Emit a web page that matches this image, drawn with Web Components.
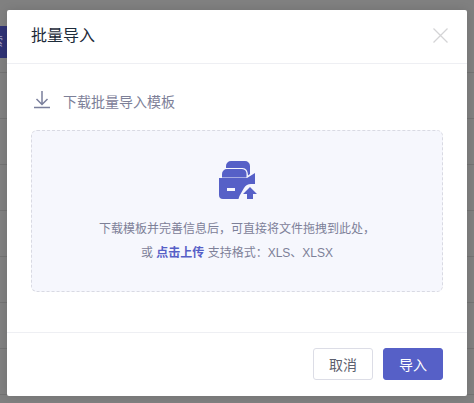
<!DOCTYPE html>
<html lang="zh">
<head>
<meta charset="UTF-8">
<title>批量导入</title>
<style>
  html, body { margin: 0; height: 100%; overflow: hidden; }
  body { font-family: "Liberation Sans", "Noto Sans CJK SC", sans-serif; }
</style>
</head>
<body>
<import-page>
  <import-dialog title-text="批量导入">
    <template-link>下载批量导入模板</template-link>
    <upload-zone></upload-zone>
    <dialog-button slot="footer">取消</dialog-button>
    <dialog-button slot="footer" primary>导入</dialog-button>
  </import-dialog>
</import-page>

<script>
class ImportPage extends HTMLElement {
  constructor() {
    super();
    // dimmed table rows behind the modal
    const rows = Array.from({ length: 7 }, () => '<div class="row"></div>').join('');
    this.attachShadow({ mode: 'open' }).innerHTML = `
      <style>
        :host { display: block; position: relative; width: 474px; height: 403px; background: #808080; overflow: hidden; }
        .table { padding-top: 26px; }
        .row { height: 46px; box-sizing: border-box; border-bottom: 1px solid #737373; }
        .first { height: 47px; box-sizing: border-box; border-bottom: 1px solid #737373; }
        .tag { width: 7px; height: 32px; background: #2f3274; color: #a5a6c6; font-size: 12px; line-height: 32px; overflow: hidden; white-space: nowrap; }
        .tag span { display: block; margin-left: -9px; }
        .modal { position: absolute; left: 7px; top: 10px; width: 460px; height: 386px; }
      </style>
      <div class="table">
        <div class="first"><div class="tag"><span>索</span></div></div>
        ${rows}
      </div>
      <div class="modal"><slot></slot></div>`;
  }
}

class ImportDialog extends HTMLElement {
  constructor() {
    super();
    this.attachShadow({ mode: 'open' }).innerHTML = `
      <style>
        :host { display: flex; flex-direction: column; height: 100%; background: #fff; border-radius: 2px; box-shadow: 0 0 10px rgba(0,0,0,.12); }
        header { height: 54px; box-sizing: border-box; border-bottom: 1px solid #eeeff3; padding: 0 19px 2px 24px; display: flex; align-items: center; justify-content: space-between; flex: none; }
        h2 { margin: 0; font-size: 16px; font-weight: 400; color: #1d2b3a; line-height: 22px; }
        svg { display: block; }
        main { flex: 1; padding: 21px 24px 0; display: flex; flex-direction: column; min-height: 0; }
        footer { border-top: 1px solid #eeeff3; height: 64px; box-sizing: border-box; padding: 15px 24px 0; display: flex; justify-content: flex-end; gap: 10px; flex: none; }
      </style>
      <header>
        <h2></h2>
        <svg width="15" height="15" viewBox="0 0 15 15" fill="none" stroke="#d4d4d6" stroke-width="1.3"><path d="M.5.5l14 14M14.500.5l-14 14"/></svg>
      </header>
      <main><slot></slot></main>
      <footer><slot name="footer"></slot></footer>`;
    this.shadowRoot.querySelector('h2').textContent = this.getAttribute('title-text');
  }
}

class TemplateLink extends HTMLElement {
  constructor() {
    super();
    this.attachShadow({ mode: 'open' }).innerHTML = `
      <style>
        :host { display: flex; align-items: center; gap: 12px; height: 32px; margin-bottom: 13px; color: #7d8098; font-size: 14px; flex: none; }
        svg { display: block; flex: none; }
      </style>
      <svg width="20" height="20" viewBox="0 0 20 20" fill="none" stroke="#7a7f9c" stroke-width="1.5"><path d="M11 0v13.500M5.500 8l5.500 5.500L16.500 8M3 16.500h16"/></svg>
      <span><slot></slot></span>`;
  }
}

class UploadZone extends HTMLElement {
  constructor() {
    super();
    this.attachShadow({ mode: 'open' }).innerHTML = `
      <style>
        :host { display: flex; flex-direction: column; align-items: center; box-sizing: border-box; height: 162px; border: 1px dashed #d9dae3; border-radius: 6px; background: #f6f7fd; padding-top: 29px; color: #7d8098; font-size: 12px; line-height: 24px; flex: none; }
        svg { display: block; margin: 0 0 17px 2px; }
        b { color: #5660c7; font-weight: 700; }
        p { margin: 0; text-align: center; }
      </style>
      <svg width="38" height="40" viewBox="0 0 38 40" fill="#5660c7">
        <path d="M7 8V6a5 5 0 0 1 5-5h14a5 5 0 0 1 5 5v8l-2 1.500C29 11 27 8 23.500 8z"/>
        <path d="M3 17.500V14a5 5 0 0 1 5-5h15a5 5 0 0 1 4.500 5v3.500z"/>
        <path fill-rule="evenodd" d="M0 18h28l8-5v11h-4c-3 0-5.500 1.500-7 4l-4 7c-.8 1.400-1 2.800-1.500 4H4a4 4 0 0 1-4-4zM8 28v3h8v-3z"/>
        <path d="M31 27l7 7h-4v5h-6v-5h-4z"/>
      </svg>
      <p>下载模板并完善信息后，可直接将文件拖拽到此处，</p>
      <p>或 <b>点击上传</b> 支持格式：XLS、XLSX</p>`;
  }
}

class DialogButton extends HTMLElement {
  constructor() {
    super();
    this.attachShadow({ mode: 'open' }).innerHTML = `
      <style>
        :host { display: flex; align-items: center; justify-content: center; box-sizing: border-box; width: 60px; height: 32px; border: 1px solid #dcdde6; border-radius: 3px; background: #fff; color: #5c5f6e; font-size: 14px; }
        :host([primary]) { background: #5660c7; border-color: #5660c7; color: #fff; }
      </style>
      <slot></slot>`;
  }
}

customElements.define('import-page', ImportPage);
customElements.define('import-dialog', ImportDialog);
customElements.define('template-link', TemplateLink);
customElements.define('upload-zone', UploadZone);
customElements.define('dialog-button', DialogButton);
</script>
</body>
</html>
